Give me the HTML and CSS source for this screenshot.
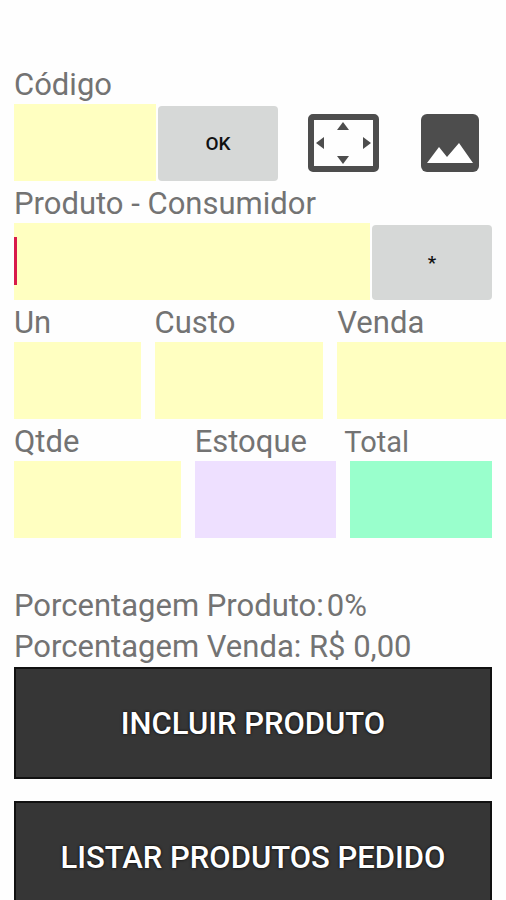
FILE: index.html
```
<!DOCTYPE html>
<html lang="pt-BR">
<head>
  <meta charset="UTF-8">
  <meta name="viewport" content="width=device-width, initial-scale=1.0">
  <title>Produto</title>
  <link rel="stylesheet" href="styles.css">
</head>
<body>
  <form class="produto-form">
    <label class="label" for="codigo">Código</label>
    <div class="row">
      <input type="text" id="codigo" class="box codigo">
      <button type="button" class="btn-small">OK</button>
      <div class="icons">
        <button type="button" class="btn-icon" aria-label="Escanear">
          <svg width="71" height="60" viewBox="0 0 71 60">
            <rect x="3" y="4" width="65" height="52" rx="2" fill="none" stroke="#4d4d4d" stroke-width="6"/>
            <path d="M35 9l6 8H29zM35 51l6-8H29zM8 30l8-6v12zM63 30l-8-6v12z" fill="#4d4d4d"/>
          </svg>
        </button>
        <button type="button" class="btn-icon" aria-label="Imagem">
          <svg width="60" height="60" viewBox="0 0 60 60">
            <rect x="1" y="1" width="58" height="58" rx="6" fill="#4d4d4d"/>
            <path d="M7 50l12-16 8 10 12-14 14 20z" fill="#fff"/>
          </svg>
        </button>
      </div>
    </div>

    <label class="label" for="produto">Produto - Consumidor</label>
    <div class="row">
      <div class="produto">
        <input type="text" id="produto" class="box">
        <span class="cursor"></span>
      </div>
      <button type="button" class="btn-small">*</button>
    </div>

    <div class="row-precos">
      <div>
        <label class="label" for="un">Un</label>
        <input type="text" id="un" class="box">
      </div>
      <div>
        <label class="label" for="custo">Custo</label>
        <input type="text" id="custo" class="box">
      </div>
      <div>
        <label class="label" for="venda">Venda</label>
        <input type="text" id="venda" class="box">
      </div>
    </div>

    <div class="row-qtde">
      <div>
        <label class="label" for="qtde">Qtde</label>
        <input type="text" id="qtde" class="box">
      </div>
      <div>
        <label class="label" for="estoque">Estoque</label>
        <input type="text" id="estoque" class="box estoque">
      </div>
      <div class="col-total">
        <label class="label label-total" for="total">Total</label>
        <div class="total-wrap">
          <input type="text" id="total" class="box total">
        </div>
      </div>
    </div>

    <div class="resumo">
      <p><span>Porcentagem Produto:</span><span class="valor">0%</span></p>
      <p>Porcentagem Venda: R$ 0,00</p>
    </div>

    <div class="acoes">
      <button type="button" class="btn-big">INCLUIR PRODUTO</button>
      <button type="button" class="btn-big">LISTAR PRODUTOS PEDIDO</button>
    </div>
  </form>
</body>
</html>
```
FILE: styles.css
```
* {
  box-sizing: border-box;
}

body {
  margin: 0;
  height: 100vh;
  overflow: hidden;
  background-color: #fefefe;
  font-family: Roboto, sans-serif;
  color: #737373;
}

.produto-form {
  padding: 62px 14px 0;
}

.label {
  display: block;
  height: 42px;
  font-size: 31px;
  line-height: 46px;
}

.label-total {
  font-size: 29px;
}

.row {
  display: flex;
  gap: 2px;
}

.box {
  display: block;
  width: 100%;
  height: 77px;
  padding: 0 8px;
  border: none;
  border-radius: 0;
  background-color: #ffffc1;
  font-family: inherit;
  font-size: 31px;
  color: #333;
}

.codigo {
  width: 142px;
}

.estoque {
  background-color: #eee0ff;
}

.total {
  background-color: #99ffcc;
}

.btn-small {
  flex: none;
  width: 120px;
  height: 75px;
  margin: 2px 0 0;
  border: none;
  border-radius: 4px;
  background-color: #d6d8d7;
  font-family: inherit;
  font-size: 19px;
  font-weight: 500;
  color: #111;
}

.icons {
  flex: 1;
  display: flex;
  justify-content: space-between;
  align-items: center;
  padding: 0 12px 0 28px;
}

.btn-icon {
  padding: 0;
  border: none;
  background: none;
}

.btn-icon svg {
  display: block;
}

.produto {
  position: relative;
  flex: 1;
}

/* text cursor over the active field */
.cursor {
  position: absolute;
  left: 0;
  top: 14px;
  width: 3px;
  height: 48px;
  background-color: #d81b4a;
}

/* last column runs up to the edge of the screen */
.row-precos {
  display: grid;
  grid-template-columns: 3fr 4fr 4fr;
  gap: 14px;
  margin-right: -14px;
}

.row-qtde {
  display: grid;
  grid-template-columns: 20fr 17fr 17fr;
  gap: 14px;
}

.col-total {
  margin-left: -6px;
}

.total-wrap {
  padding-left: 6px;
}

.resumo {
  padding-top: 47px;
  font-size: 31px;
  line-height: 41px;
}

.resumo p {
  margin: 0;
}

.valor {
  margin-left: 3px;
}

.acoes {
  display: flex;
  flex-direction: column;
  gap: 22px;
}

.btn-big {
  height: 112px;
  border: 2px solid #111;
  background-color: #363636;
  font-family: inherit;
  font-size: 31px;
  font-weight: 500;
  color: #fff;
  text-shadow: 0 0 3px #000;
}
```
